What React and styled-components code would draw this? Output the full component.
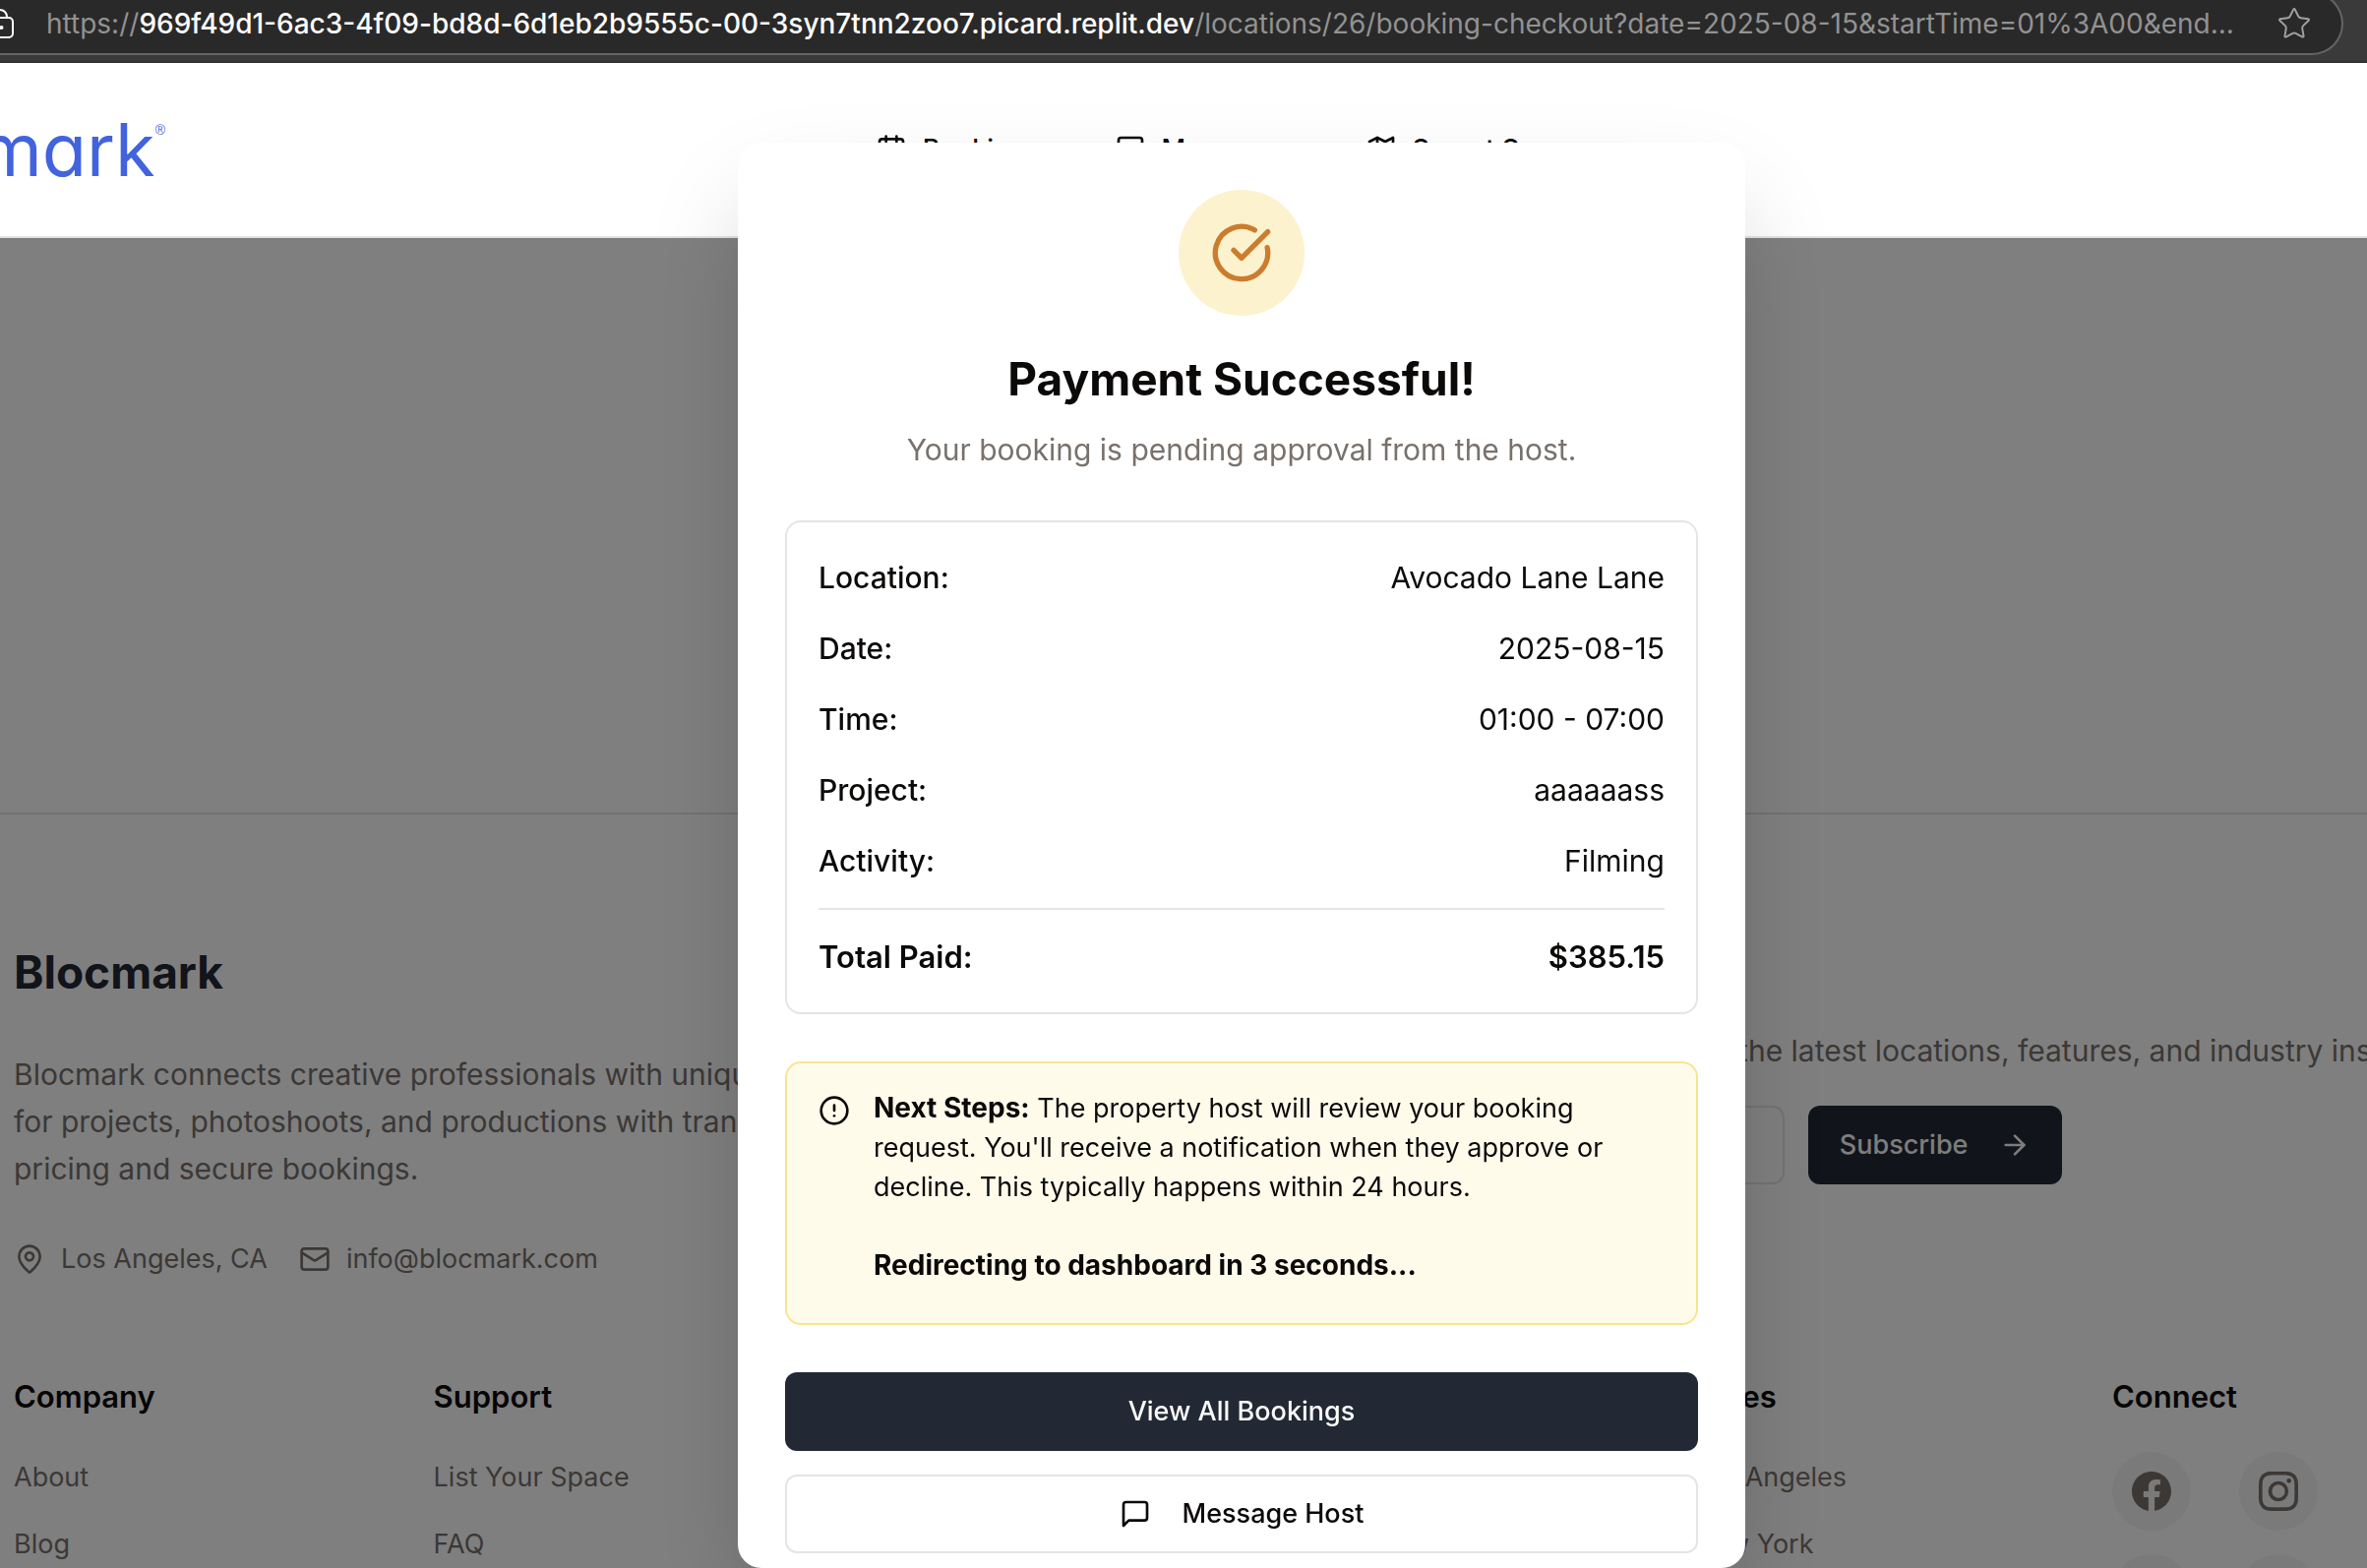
import React from 'react';
import styled, { createGlobalStyle } from 'styled-components';
import {
  ArrowRight,
  Calendar,
  CircleAlert,
  CircleCheckBig,
  Mail,
  MapPin,
  Star,
} from 'lucide-react';
import { BsInstagram, BsLinkedin, BsTwitterX } from 'react-icons/bs';

const color = {
  text: '#0c0a09',
  muted: '#78716c',
  line: '#e5e5e5',
  primary: '#222935',
  brand: '#4263de',
};

const GlobalStyle = createGlobalStyle`
  *, *::before, *::after { box-sizing: border-box; }
  body {
    margin: 0;
    background: #fff;
    color: ${color.text};
    font-family: Inter, "Liberation Sans", sans-serif;
    font-size: 30px;
    line-height: 48px;
  }
  h2, h3, p, ul, dl, dd { margin: 0; padding: 0; }
  ul { list-style: none; }
  a { color: inherit; text-decoration: none; }
  button, input { font: inherit; color: inherit; }
  svg { display: block; flex-shrink: 0; }
`;

const Window = styled.div`
  display: flex;
  flex-direction: column;
  height: 100vh;
  overflow: hidden;
`;

/* Browser bar */

const BrowserBar = styled.div`
  position: relative;
  z-index: 2;
  flex-shrink: 0;
  height: 64px;
  padding-right: 24px;
  background: #3a3a3a;
  border-bottom: 2px solid #303030;
  overflow: hidden;
`;

const AddressField = styled.div`
  display: flex;
  align-items: center;
  height: 64px;
  margin-top: -8px;
  padding-right: 30px;
  background: #292929;
  border: 2px solid #656565;
  border-left: 0;
  border-radius: 0 32px 32px 0;
`;

const Url = styled.span`
  flex: 1;
  margin-left: 33px;
  font-size: 28px;
  line-height: 40px;
  white-space: nowrap;
  color: #929292;
`;

const Host = styled.span`
  font-weight: 500;
  color: #fff;
`;

const BarButton = styled.button`
  padding: 0;
  border: 0;
  background: none;
  color: #a0a0a0;
`;

/* Site header */

const Header = styled.header`
  position: relative;
  z-index: 2;
  flex-shrink: 0;
  display: flex;
  align-items: center;
  height: 178px;
  background: #fff;
  border-bottom: 2px solid #e2e2e2;
  overflow: hidden;
`;

const Logo = styled.a`
  display: flex;
  justify-content: flex-end;
  flex-shrink: 0;
  width: 168px;
  color: ${color.brand};
  font-size: 74px;
  line-height: 88px;
  font-feature-settings: "cv11";
`;

const Registered = styled.sup`
  font-family: "Liberation Sans", sans-serif;
  font-size: 14px;
  line-height: 48px;
  vertical-align: top;
`;

const Nav = styled.nav`
  display: flex;
  gap: 75px;
  margin-left: 30%;
`;

const NavLink = styled.a`
  display: flex;
  align-items: center;
  gap: 16px;
  font-size: 27px;
  line-height: 40px;
  font-weight: 500;
`;

/* Page body */

const Main = styled.main`
  flex: 0 0 584px;
`;

const Footer = styled.footer`
  flex-shrink: 0;
  padding: 128px 0 0 14px;
  border-top: 2px solid ${color.line};
`;

const FooterGrid = styled.div`
  display: grid;
  grid-template-columns: repeat(5, 1fr) 259px;
`;

const Brand = styled.section`
  grid-column: 1 / span 3;
`;

const BrandName = styled.h2`
  margin-bottom: 48px;
  color: ${color.primary};
  font-size: 46px;
  font-weight: 700;
  line-height: 64px;
`;

const Blurb = styled.p`
  max-width: 900px;
  margin-bottom: 48px;
  color: ${color.muted};
`;

const Contacts = styled.address`
  display: flex;
  gap: 32px;
  color: ${color.muted};
  font-size: 27px;
  font-style: normal;
  line-height: 40px;
`;

const Contact = styled.span`
  display: flex;
  align-items: center;
  gap: 16px;
`;

const Newsletter = styled.section`
  grid-column: 4 / span 3;
`;

const ColumnTitle = styled.h3`
  margin-bottom: 32px;
  font-size: 31px;
  font-weight: 600;
  line-height: 48px;
`;

const Pitch = styled.p`
  margin: 40px 0 32px;
  color: ${color.muted};
  white-space: nowrap;
`;

const Form = styled.form`
  display: flex;
  gap: 24px;
`;

const EmailInput = styled.input`
  width: 520px;
  height: 80px;
  padding: 0 24px;
  border: 2px solid ${color.line};
  border-radius: 12px;
  background: #fff;
  font-size: 27px;
`;

const Button = styled.button`
  display: flex;
  align-items: center;
  justify-content: center;
  gap: 32px;
  height: 80px;
  padding: 0 32px;
  border: ${(p) => (p.$outline ? `2px solid ${color.line}` : '0')};
  border-radius: 12px;
  background: ${(p) => (p.$outline ? '#fff' : color.primary)};
  color: ${(p) => (p.$outline ? color.text : '#fafaf9')};
  font-size: 27px;
  font-weight: 500;
  line-height: 40px;
`;

const Columns = styled(FooterGrid)`
  margin-top: 96px;
`;

const Column = styled.section`
  grid-column: ${(p) => p.$at};
`;

const Links = styled.ul`
  display: flex;
  flex-direction: column;
  gap: 16px;
  color: ${color.muted};
  font-size: 27px;
  line-height: 52px;
`;

const Socials = styled.div`
  display: grid;
  grid-template-columns: repeat(2, 80px);
  gap: 24px 49px;
`;

const Social = styled.a`
  display: grid;
  place-items: center;
  height: 80px;
  border-radius: 50%;
  background: #f4f4f4;
  color: ${color.muted};
`;

/* Dialog */

const Backdrop = styled.div`
  position: fixed;
  inset: 242px 0 0;
  z-index: 1;
  background: rgba(0, 0, 0, 0.5);
`;

const DialogLayer = styled.div`
  position: fixed;
  inset: 64px 0 0;
  z-index: 3;
  display: flex;
  justify-content: center;
  padding: 81px 0 0 118px;
  overflow: hidden;
`;

const Dialog = styled.div`
  display: flex;
  flex-direction: column;
  gap: 48px;
  width: 1024px;
  padding: 48px;
  border-radius: 24px;
  background: #fff;
  box-shadow: 0 50px 100px -24px rgba(0, 0, 0, 0.25);
  overflow: hidden;
`;

const Intro = styled.div`
  display: flex;
  flex-direction: column;
  align-items: center;
`;

const Badge = styled.div`
  display: grid;
  place-items: center;
  width: 128px;
  height: 128px;
  margin-bottom: 32px;
  border-radius: 50%;
  background: #fcf2cd;
  color: #cc7c2e;
`;

const Title = styled.h2`
  margin-bottom: 16px;
  font-size: 46px;
  font-weight: 700;
  line-height: 64px;
`;

const Subtitle = styled.p`
  color: ${color.muted};
`;

const Summary = styled.dl`
  display: flex;
  flex-direction: column;
  gap: 24px;
  padding: 32px;
  border: 2px solid ${color.line};
  border-radius: 16px;
`;

const SummaryRow = styled.div`
  display: flex;
  justify-content: space-between;
  font-weight: 400;

  dt { font-weight: 500; }
`;

const TotalRow = styled(SummaryRow)`
  padding-top: 24px;
  border-top: 2px solid ${color.line};
  font-size: 31px;

  &, dt { font-weight: 600; }
`;

const Notice = styled.div`
  display: flex;
  gap: 24px;
  padding: 26px 32px 38px;
  border: 2px solid #f8e48f;
  border-radius: 16px;
  background: #fffbeb;
  font-size: 27px;
  line-height: 40px;

  svg { margin-top: 6px; }
`;

const NoticeText = styled.div`
  display: flex;
  flex-direction: column;
  gap: 40px;
`;

const Strong = styled.strong`
  font-size: 28px;
  font-weight: 700;
  line-height: 32px;
`;

const Actions = styled.div`
  display: flex;
  flex-direction: column;
  gap: 24px;
`;

const LockIcon = () => (
  <svg width="14" height="32" viewBox="0 0 14 32" fill="none" stroke="#fff" strokeWidth="2" aria-hidden="true">
    <path d="M0 2a7 7 0 0 1 7 7v1" />
    <path d="M0 10h9a4 4 0 0 1 4 4v12a4 4 0 0 1-4 4H0" />
    <circle cx="1.5" cy="20" r="2" fill="#fff" stroke="none" />
  </svg>
);

const StrokeIcon = ({ children }) => (
  <svg
    width="32"
    height="32"
    viewBox="0 0 24 24"
    fill="none"
    stroke="currentColor"
    strokeWidth="2"
    strokeLinecap="round"
    strokeLinejoin="round"
    aria-hidden="true"
  >
    {children}
  </svg>
);

const MessageIcon = () => (
  <StrokeIcon>
    <path d="M21 15a2 2 0 0 1-2 2H7l-4 4V5a2 2 0 0 1 2-2h14a2 2 0 0 1 2 2z" />
  </StrokeIcon>
);

const MapIcon = () => (
  <StrokeIcon>
    <path d="M3 6l6-3 6 3 6-3v15l-6 3-6-3-6 3z" />
    <path d="M9 3v15M15 6v15" />
  </StrokeIcon>
);

const FacebookIcon = () => (
  <svg width="40" height="40" viewBox="0 0 24 24" fill="currentColor" aria-hidden="true">
    <path d="M24 12.073c0-6.627-5.373-12-12-12s-12 5.373-12 12c0 5.99 4.388 10.954 10.125 11.854v-8.385H7.078v-3.47h3.047V9.43c0-3.007 1.792-4.669 4.533-4.669 1.312 0 2.686.235 2.686.235v2.953H15.83c-1.491 0-1.956.925-1.956 1.874v2.25h3.328l-.532 3.47h-2.796v8.385C19.612 23.027 24 18.062 24 12.073z" />
  </svg>
);

const details = [
  ['Location:', 'Avocado Lane Lane'],
  ['Date:', '2025-08-15'],
  ['Time:', '01:00 - 07:00'],
  ['Project:', 'aaaaaass'],
  ['Activity:', 'Filming'],
];

const linkColumns = [
  { at: 1, title: 'Company', links: ['About', 'Blog'] },
  { at: 2, title: 'Support', links: ['List Your Space', 'FAQ'] },
  { at: 5, title: 'Cities', links: ['Los Angeles', 'New York'] },
];

const socials = [
  ['Facebook', <FacebookIcon />],
  ['Instagram', <BsInstagram size={40} />],
  ['X', <BsTwitterX size={40} />],
  ['LinkedIn', <BsLinkedin size={40} />],
];

export default function App() {
  return (
    <>
      <GlobalStyle />
      <Window>
        <BrowserBar>
          <AddressField>
            <LockIcon />
            <Url>
              https://
              <Host>969f49d1-6ac3-4f09-bd8d-6d1eb2b9555c-00-3syn7tnn2zoo7.picard.replit.dev</Host>
              /locations/26/booking-checkout?date=2025-08-15&amp;startTime=01%3A00&amp;end...
            </Url>
            <BarButton type="button" aria-label="Bookmark this page">
              <Star size={36} strokeWidth={1.3} />
            </BarButton>
          </AddressField>
        </BrowserBar>

        <Header>
          <Logo href="#home">
            <span>blocmark</span>
            <Registered>®</Registered>
          </Logo>
          <Nav>
            <NavLink href="#bookings"><Calendar size={32} />Bookings</NavLink>
            <NavLink href="#messages"><MessageIcon />Messages</NavLink>
            <NavLink href="#spaces"><MapIcon />Secret Spaces</NavLink>
          </Nav>
        </Header>

        <Main />

        <Footer>
          <FooterGrid>
            <Brand>
              <BrandName>Blocmark</BrandName>
              <Blurb>
                Blocmark connects creative professionals with unique spaces for projects,
                photoshoots, and productions with transparent pricing and secure bookings.
              </Blurb>
              <Contacts>
                <Contact><MapPin size={32} />Los Angeles, CA</Contact>
                <Contact>
                  <Mail size={32} />
                  <a href="mailto:info@blocmark.com">info@blocmark.com</a>
                </Contact>
              </Contacts>
            </Brand>
            <Newsletter>
              <ColumnTitle>Stay Updated</ColumnTitle>
              <Pitch>Subscribe to our newsletter, with the latest locations, features, and industry insights.</Pitch>
              <Form>
                <EmailInput type="email" aria-label="Email address" />
                <Button type="button">Subscribe<ArrowRight size={32} /></Button>
              </Form>
            </Newsletter>
          </FooterGrid>

          <Columns>
            {linkColumns.map((column) => (
              <Column key={column.title} $at={column.at}>
                <ColumnTitle>{column.title}</ColumnTitle>
                <Links>
                  {column.links.map((link) => (
                    <li key={link}><a href="#footer">{link}</a></li>
                  ))}
                </Links>
              </Column>
            ))}
            <Column $at={6}>
              <ColumnTitle>Connect</ColumnTitle>
              <Socials>
                {socials.map(([name, icon]) => (
                  <Social key={name} href="#social" aria-label={name}>{icon}</Social>
                ))}
              </Socials>
            </Column>
          </Columns>
        </Footer>
      </Window>

      <Backdrop />
      <DialogLayer>
        <Dialog role="dialog" aria-labelledby="dialog-title">
          <Intro>
            <Badge><CircleCheckBig size={64} /></Badge>
            <Title id="dialog-title">Payment Successful!</Title>
            <Subtitle>Your booking is pending approval from the host.</Subtitle>
          </Intro>

          <Summary>
            {details.map(([label, value]) => (
              <SummaryRow key={label}>
                <dt>{label}</dt>
                <dd>{value}</dd>
              </SummaryRow>
            ))}
            <TotalRow>
              <dt>Total Paid:</dt>
              <dd>$385.15</dd>
            </TotalRow>
          </Summary>

          <Notice role="status">
            <CircleAlert size={32} />
            <NoticeText>
              <p>
                <Strong>Next Steps:</Strong> The property host will review your booking request.
                You'll receive a notification when they approve or decline. This typically
                happens within 24 hours.
              </p>
              <p><Strong>Redirecting to dashboard in 3 seconds...</Strong></p>
            </NoticeText>
          </Notice>

          <Actions>
            <Button type="button">View All Bookings</Button>
            <Button type="button" $outline><MessageIcon />Message Host</Button>
          </Actions>
        </Dialog>
      </DialogLayer>
    </>
  );
}
